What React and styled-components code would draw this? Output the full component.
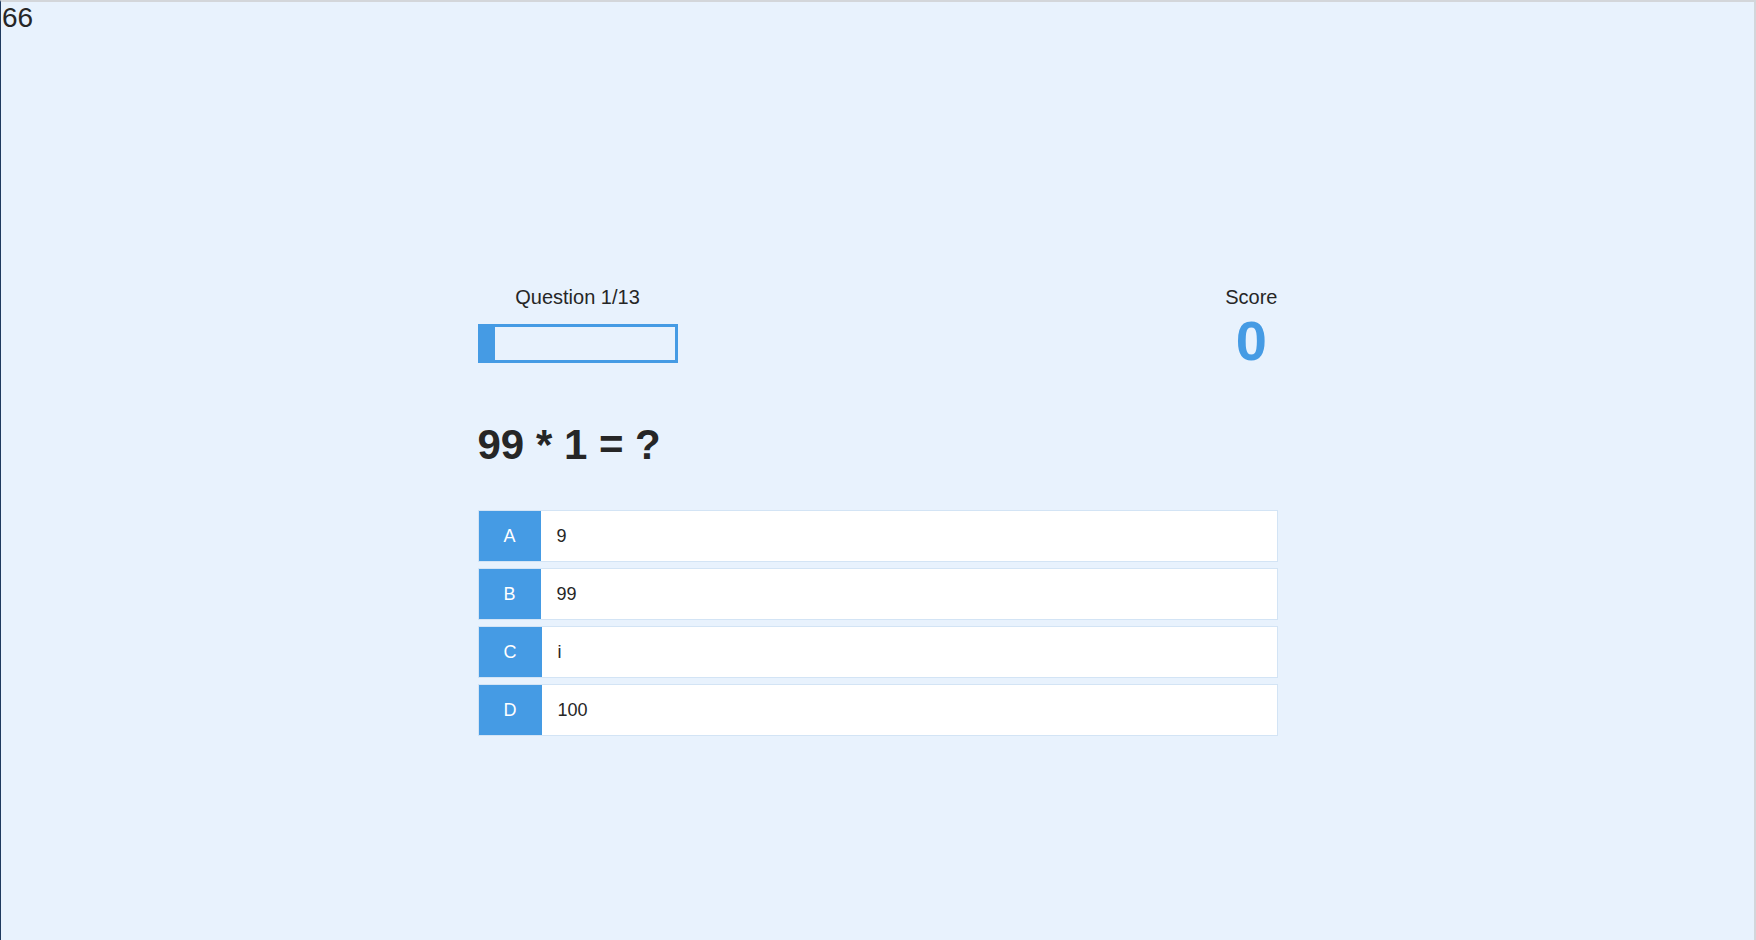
import React from 'react';
import styled, { createGlobalStyle } from 'styled-components';

const GlobalStyle = createGlobalStyle`
  html, body {
    margin: 0;
    padding: 0;
    background: #e8f2fd;
    font-family: "Liberation Sans", Arial, Helvetica, sans-serif;
    color: #262626;
  }
`;

const Page = styled.div`
  box-sizing: border-box;
  height: 940px;
  border-top: 2px solid #d3d6da;
  border-left: 1px solid #1f3a5f;
  border-right: 2px solid #d3d6da;
  background: #e8f2fd;
`;

const Counter = styled.div`
  font-size: 28px;
  line-height: 32px;
  color: #262626;
  padding-left: 1px;
`;

const Quiz = styled.div`
  width: 800px;
  margin: 252px auto 0;
`;

const Header = styled.div`
  display: flex;
  justify-content: space-between;
  align-items: flex-start;
`;

const ProgressBlock = styled.div`
  display: flex;
  flex-direction: column;
  align-items: center;
  width: 200px;
`;

const Label = styled.div`
  font-size: 20px;
  line-height: 23px;
  color: #262626;
`;

const Bar = styled.div`
  box-sizing: border-box;
  margin-top: 15px;
  width: 200px;
  height: 39px;
  border: 3px solid #459be4;
  background: #e8f2fd;
`;

const Fill = styled.div`
  height: 100%;
  background: #459be4;
`;

const ScoreBlock = styled.div`
  display: flex;
  flex-direction: column;
  align-items: center;
`;

const ScoreValue = styled.div`
  font-size: 56px;
  font-weight: 700;
  line-height: 64px;
  color: #459be4;
`;

const Question = styled.h1`
  margin: 48px 0 41px;
  font-size: 42px;
  line-height: 48px;
  font-weight: 700;
  color: #262626;
`;

const Options = styled.div`
  display: flex;
  flex-direction: column;
  gap: 6px;
`;

const Option = styled.div`
  box-sizing: border-box;
  display: flex;
  height: 52px;
  border: 1px solid #d3e4f5;
  background: #ffffff;
  cursor: pointer;
`;

const Letter = styled.div`
  width: ${p => p.$w}px;
  display: flex;
  align-items: center;
  justify-content: center;
  background: #459be4;
  color: #ffffff;
  font-size: 18px;
`;

const Answer = styled.div`
  display: flex;
  align-items: center;
  padding-left: 16px;
  font-size: 18px;
  color: #262626;
`;

const options = [
  { key: 'A', text: '9', w: 62 },
  { key: 'B', text: '99', w: 62 },
  { key: 'C', text: 'i', w: 63 },
  { key: 'D', text: '100', w: 63 },
];

export default function App() {
  const current = 1;
  const total = 13;

  return (
    <Page>
      <GlobalStyle />
      <Counter>66</Counter>
      <Quiz>
        <Header>
          <ProgressBlock>
            <Label>Question {current}/{total}</Label>
            <Bar>
              <Fill style={{ width: `${(current / total) * 100}%` }} />
            </Bar>
          </ProgressBlock>
          <ScoreBlock>
            <Label>Score</Label>
            <ScoreValue>0</ScoreValue>
          </ScoreBlock>
        </Header>
        <Question>99 * 1 = ?</Question>
        <Options>
          {options.map(o => (
            <Option key={o.key}>
              <Letter $w={o.w}>{o.key}</Letter>
              <Answer>{o.text}</Answer>
            </Option>
          ))}
        </Options>
      </Quiz>
    </Page>
  );
}
